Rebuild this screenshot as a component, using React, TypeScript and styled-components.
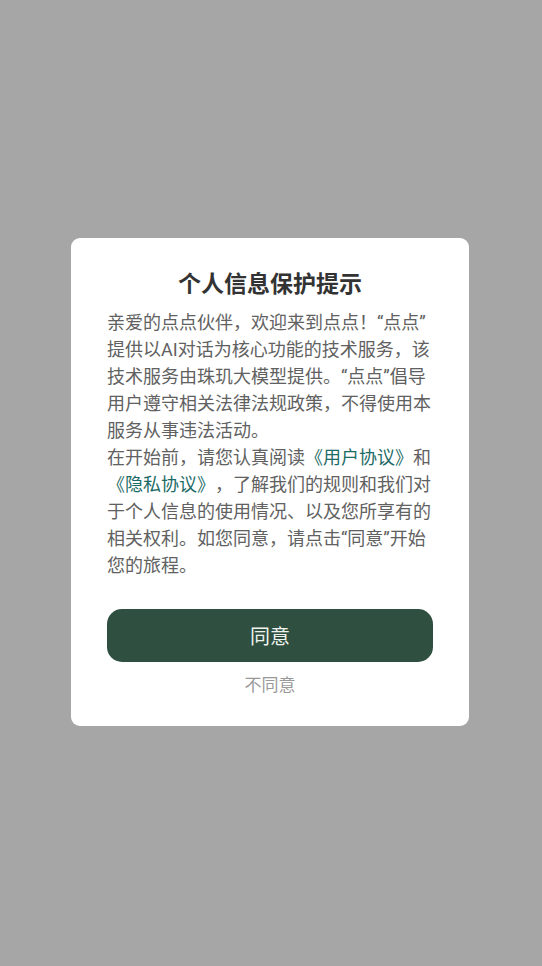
import React from "react";
import styled, { createGlobalStyle } from "styled-components";

const Global = createGlobalStyle`
  html, body { margin: 0; padding: 0; background: #a6a6a6; }
  body { font-family: Roboto, "Noto Sans CJK SC", sans-serif; }
  * { box-sizing: border-box; }
`;

const Screen = styled.div`
  width: 542px;
  height: 966px;
  background: #a6a6a6;
  display: flex;
  align-items: center;
  justify-content: center;
`;

const Card = styled.div`
  width: 398px;
  margin-left: -2px;
  margin-top: -2px;
  background: #ffffff;
  border-radius: 9px;
  padding: 29px 36px 30px;
  display: flex;
  flex-direction: column;
  align-items: stretch;
`;

const Title = styled.h2`
  margin: 0;
  font-family: "Noto Sans CJK SC", sans-serif;
  font-size: 23px;
  line-height: 30px;
  font-weight: 700;
  color: #333333;
  text-align: center;
`;

const Body = styled.div`
  margin-top: 12px;
  font-family: Roboto, "Noto Sans CJK SC", sans-serif;
  font-size: 18px;
  line-height: 27px;
  color: #616161;
  white-space: nowrap;
  text-spacing-trim: space-all;
`;

const Para = styled.p`
  margin: 0;
`;

const Link = styled.span`
  color: #1d6b66;
`;

const AgreeButton = styled.button`
  margin-top: 30px;
  height: 53px;
  width: 100%;
  border: none;
  border-radius: 15px;
  background: #2f4f40;
  color: #eef3ee;
  font-family: "Noto Sans CJK SC", sans-serif;
  font-size: 20px;
  cursor: pointer;
`;

const Decline = styled.button`
  margin-top: 9px;
  border: none;
  background: transparent;
  color: #999999;
  font-family: "Noto Sans CJK SC", sans-serif;
  font-size: 17px;
  line-height: 25px;
  padding: 0;
  cursor: pointer;
  align-self: center;
`;

export default function App() {
  return (
    <>
      <Global />
      <Screen>
        <Card>
          <Title>个人信息保护提示</Title>
          <Body>
            <Para>
              亲爱的点点伙伴，欢迎来到点点！“点点”
              <br />
              提供以AI对话为核心功能的技术服务，该
              <br />
              技术服务由珠玑大模型提供。“点点”倡导
              <br />
              用户遵守相关法律法规政策，不得使用本
              <br />
              服务从事违法活动。
            </Para>
            <Para>
              在开始前，请您认真阅读<Link>《用户协议》</Link>和
              <br />
              <Link>《隐私协议》</Link>，了解我们的规则和我们对
              <br />
              于个人信息的使用情况、以及您所享有的
              <br />
              相关权利。如您同意，请点击“同意”开始
              <br />
              您的旅程。
            </Para>
          </Body>
          <AgreeButton>同意</AgreeButton>
          <Decline>不同意</Decline>
        </Card>
      </Screen>
    </>
  );
}
